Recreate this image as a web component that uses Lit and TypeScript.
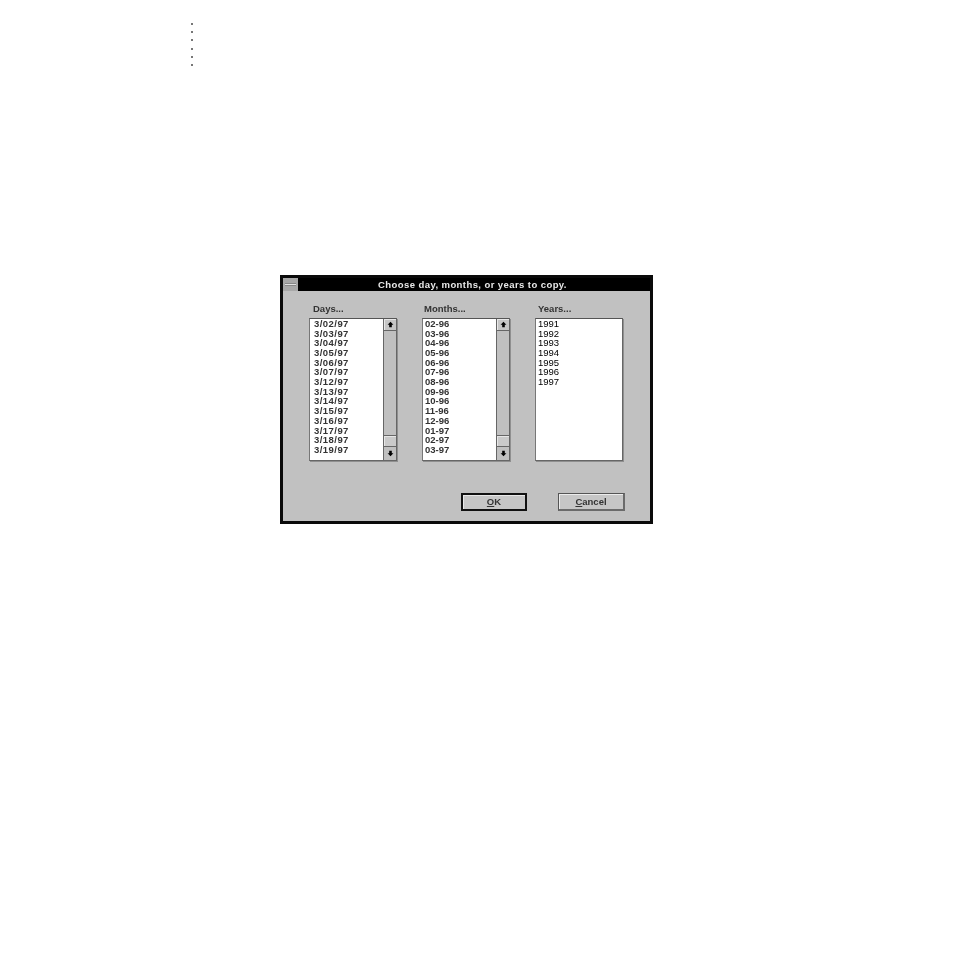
import { LitElement, html, css, svg } from "lit";
import { customElement } from "lit/decorators.js";

const DAYS = ["3/02/97","3/03/97","3/04/97","3/05/97","3/06/97","3/07/97","3/12/97","3/13/97","3/14/97","3/15/97","3/16/97","3/17/97","3/18/97","3/19/97"];
const MONTHS = ["02-96","03-96","04-96","05-96","06-96","07-96","08-96","09-96","10-96","11-96","12-96","01-97","02-97","03-97"];
const YEARS = ["1991","1992","1993","1994","1995","1996","1997"];

const up = svg`<svg class="arrow" viewBox="0 0 7 7" width="7" height="7"><path d="M3.5 .8 L6.4 3.8 L4.8 3.8 L4.8 6.2 L2.2 6.2 L2.2 3.8 L.6 3.8 Z" fill="#000"/></svg>`;
const down = svg`<svg class="arrow" viewBox="0 0 7 7" width="7" height="7"><path d="M3.5 6.2 L6.4 3.2 L4.8 3.2 L4.8 .8 L2.2 .8 L2.2 3.2 L.6 3.2 Z" fill="#000"/></svg>`;

@customElement("app-root")
export class AppRoot extends LitElement {
  static styles = css`
    :host { display: block; width: 954px; height: 954px; background: #fff; overflow: hidden; font-family: "Liberation Sans", Arial, sans-serif; color: #111; }
    .page { display: flex; flex-direction: column; padding: 23px 0 0 190.5px; }
    .dots { display: flex; flex-direction: column; gap: 6.2px; }
    .dot { width: 2px; height: 2px; background: #777; }
    .dialog { margin: 209px 0 0 89.5px; width: 373px; height: 249px; box-sizing: border-box; border: 3px solid #0a0a0a; background: #c1c1c1; display: flex; flex-direction: column; filter: blur(0.6px); }
    .title { display: flex; height: 13px; flex: none; background: #000; }
    .menu { width: 15px; flex: none; background: #a8a8a8; display: flex; align-items: center; justify-content: center; border-right: 1px solid #000; }
    .menu span { width: 11px; height: 3px; background: #e2e2e2; border-top: 1px solid #888; border-bottom: 1px solid #888; box-sizing: border-box; }
    .caption { flex: 1; text-align: center; color: #e8e8e8; font-weight: 700; font-size: 9.5px; line-height: 13px; letter-spacing: 0.42px; padding-right: 4px; }
    .body { flex: 1; display: flex; flex-direction: column; padding: 12px 25px 0 26px; }
    .cols { display: flex; gap: 25px; }
    .col { width: 88px; display: flex; flex-direction: column; }
    .label { height: 15px; font-size: 9.5px; line-height: 12px; font-weight: 700; color: #333; padding-left: 4px; }
    .months .label { padding-left: 2px; }
    .years .label { padding-left: 3px; }
    .list { height: 143px; box-sizing: border-box; background: #fff; border: 1px solid #666; border-top-color: #555; border-left-color: #777; display: flex; overflow: hidden; box-shadow: 1px 1px 0 #8f8f8f; }
    .rows { flex: 1; display: flex; flex-direction: column; }
    .row { height: 9.7px; line-height: 9.7px; font-size: 9.5px; font-weight: 700; padding-left: 2px; color: #333; }
    .days .row { letter-spacing: 0.45px; padding-left: 4px; }
    .years .row { font-weight: 400; padding-left: 2px; color: #000; }
    .bar { width: 12px; flex: none; border-left: 1px solid #666; display: flex; flex-direction: column; background: #c0c0c0; }
    .btn-s { height: 12px; flex: none; box-sizing: border-box; background: #c6c6c6; border-bottom: 1px solid #666; display: flex; align-items: center; justify-content: center; box-shadow: inset 1px 1px 0 #e8e8e8; }
    .track { flex: 1; }
    .thumb { height: 12px; flex: none; box-sizing: border-box; background: #cacaca; border-top: 1px solid #666; border-bottom: 1px solid #666; box-shadow: inset 1px 1px 0 #e6e6e6; }
    .btn-d { height: 13px; flex: none; box-sizing: border-box; background: #c0c0c0; display: flex; align-items: center; justify-content: center; }
    .arrow { display: block; }
    .actions { display: flex; justify-content: flex-end; gap: 31px; margin-top: 32px; }
    .btn { height: 18px; box-sizing: border-box; display: flex; align-items: center; justify-content: center; font-size: 9.5px; font-weight: 700; color: #333; background: #c6c6c6; }
    .btn u { text-decoration: underline; }
    .ok { width: 66px; border: 2px solid #111; box-shadow: inset 1px 1px 0 #e8e8e8; }
    .cancel { width: 67px; border: 1px solid #555; border-right-width: 2px; border-bottom-width: 2px; border-right-color: #6a6a6a; border-bottom-color: #6a6a6a; box-shadow: inset 1px 1px 0 #ececec; }
  `;

  private col(cls: string, label: string, items: string[], scroll: boolean) {
    return html`<div class="col ${cls}">
      <div class="label">${label}</div>
      <div class="list">
        <div class="rows">${items.map((t) => html`<div class="row">${t}</div>`)}</div>
        ${scroll
          ? html`<div class="bar">
              <div class="btn-s">${up}</div>
              <div class="track"></div>
              <div class="thumb"></div>
              <div class="btn-d">${down}</div>
            </div>`
          : ""}
      </div>
    </div>`;
  }

  render() {
    return html`<div class="page">
      <div class="dots">${[0, 1, 2, 3, 4, 5].map(() => html`<div class="dot"></div>`)}</div>
      <div class="dialog">
        <div class="title">
          <div class="menu"><span></span></div>
          <div class="caption">Choose day, months, or years to copy.</div>
        </div>
        <div class="body">
          <div class="cols">
            ${this.col("days", "Days...", DAYS, true)}
            ${this.col("months", "Months...", MONTHS, true)}
            ${this.col("years", "Years...", YEARS, false)}
          </div>
          <div class="actions">
            <div class="btn ok"><span><u>O</u>K</span></div>
            <div class="btn cancel"><span><u>C</u>ancel</span></div>
          </div>
        </div>
      </div>
    </div>`;
  }
}
